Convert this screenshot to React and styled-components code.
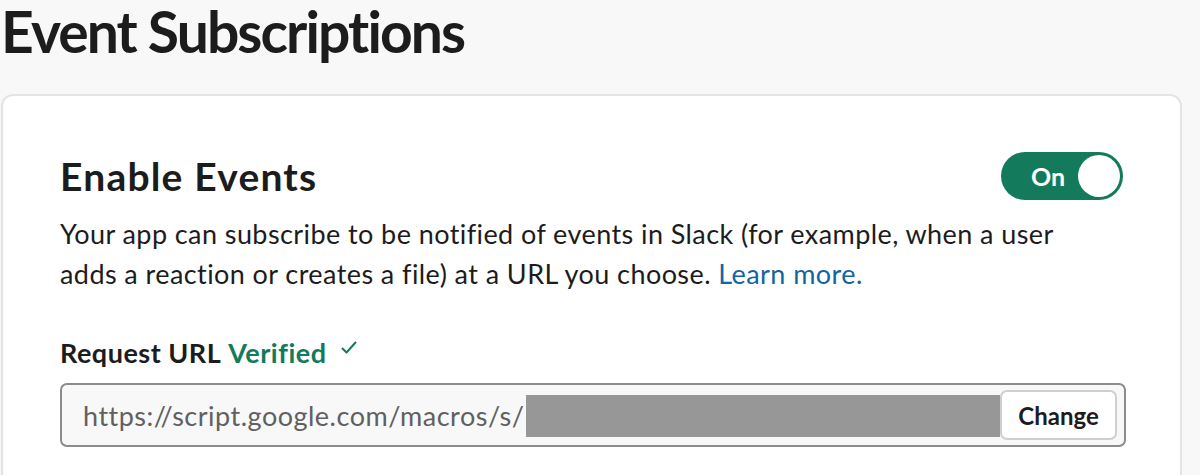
import React, { useState } from "react";
import styled, { createGlobalStyle } from "styled-components";

const GlobalStyle = createGlobalStyle`
  html, body {
    margin: 0;
    padding: 0;
    background: #f8f8f8;
    font-family: Lato, "Noto Sans", sans-serif;
    color: #1d1c1d;
    overflow: hidden;
  }
`;

const Page = styled.div`
  padding: 0 0 0 1px;
  height: 475px;
`;

const Title = styled.h1`
  margin: 0;
  padding: 0;
  font-size: 57px;
  line-height: 62px;
  font-weight: 700;
  letter-spacing: -1.9px;
  color: #1d1c1d;
`;

const Card = styled.section`
  margin-top: 32px;
  width: 1181px;
  height: 420px;
  box-sizing: border-box;
  background: #fff;
  border: 2px solid #e4e4e4;
  border-radius: 12px;
  padding: 52px 57px 0 57px;
`;

const HeaderRow = styled.div`
  display: flex;
  align-items: center;
  justify-content: space-between;
`;

const SectionTitle = styled.h2`
  margin: 0;
  font-size: 39px;
  line-height: 56px;
  font-weight: 700;
  letter-spacing: 1.2px;
  color: #1d1c1d;
`;

const Toggle = styled.button`
  display: flex;
  align-items: center;
  justify-content: space-between;
  width: 122px;
  height: 48px;
  box-sizing: border-box;
  padding: 0 3px 0 30px;
  border: none;
  border-radius: 24px;
  background: #137a5b;
  color: #fff;
  font-family: Lato, sans-serif;
  font-weight: 700;
  font-size: 25px;
  cursor: pointer;
`;

const Knob = styled.span`
  width: 42px;
  height: 42px;
  border-radius: 50%;
  background: #fff;
`;

const Description = styled.p`
  margin: 10px 0 0;
  max-width: 1030px;
  font-size: 27px;
  line-height: 40px;
  letter-spacing: 0.42px;
  color: #1d1c1d;
`;

const Link = styled.a`
  color: #1264a3;
  text-decoration: none;
`;

const Label = styled.div`
  display: flex;
  align-items: center;
  margin-top: 42px;
  font-size: 27px;
  font-weight: 700;
  line-height: 34px;
  letter-spacing: 0.5px;
`;

const Verified = styled.span`
  color: #137a5b;
  margin-left: 7px;
`;

const Check = styled.svg`
  margin-left: 15px;
  margin-top: -10px;
`;

const UrlBox = styled.div`
  display: flex;
  align-items: center;
  margin-top: 13px;
  width: 1066px;
  height: 64px;
  box-sizing: border-box;
  padding: 0 7px 0 21px;
  background: #f8f8f8;
  border: 2px solid #8c8c8c;
  border-radius: 7px;
`;

const UrlText = styled.span`
  font-size: 27px;
  letter-spacing: 0.5px;
  color: #616061;
  white-space: nowrap;
`;

const Redacted = styled.span`
  flex: 1;
  align-self: stretch;
  margin: 10px 0 8px 2px;
  background: #979797;
`;

const ChangeButton = styled.button`
  width: 117px;
  height: 50px;
  box-sizing: border-box;
  background: #fff;
  border: 2px solid #cfcfcf;
  border-radius: 7px;
  font-family: Lato, sans-serif;
  font-size: 24px;
  font-weight: 700;
  color: #1d1c1d;
  cursor: pointer;
`;

export default function App() {
  const [on, setOn] = useState(true);

  return (
    <Page>
      <GlobalStyle />
      <Title>Event Subscriptions</Title>
      <Card>
        <HeaderRow>
          <SectionTitle>Enable Events</SectionTitle>
          <Toggle onClick={() => setOn((o) => !o)}>
            {on ? "On" : "Off"}
            <Knob />
          </Toggle>
        </HeaderRow>
        <Description>
          Your app can subscribe to be notified of events in Slack (for example,
          when a user adds a reaction or creates a file) at a URL you choose.{" "}
          <Link href="#">Learn more.</Link>
        </Description>
        <Label>
          Request URL<Verified>Verified</Verified>
          <Check width="16" height="14" viewBox="0 0 16 14">
            <path
              d="M1.5 7.5 L5.5 11.5 L14.5 1.5"
              fill="none"
              stroke="#137a5b"
              strokeWidth="2"
              strokeLinecap="round"
              strokeLinejoin="round"
            />
          </Check>
        </Label>
        <UrlBox>
          <UrlText>https://script.google.com/macros/s/</UrlText>
          <Redacted />
          <ChangeButton>Change</ChangeButton>
        </UrlBox>
      </Card>
    </Page>
  );
}
